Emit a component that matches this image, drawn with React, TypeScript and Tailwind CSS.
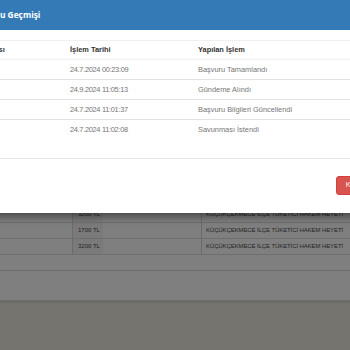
import React from 'react';

const history = [
  { no: '1', date: '24.7.2024 00:23:09', action: 'Başvuru Tamamlandı' },
  { no: '2', date: '24.9.2024 11:05:13', action: 'Gündeme Alındı' },
  { no: '3', date: '24.7.2024 11:01:37', action: 'Başvuru Bilgileri Güncellendi' },
  { no: '4', date: '24.7.2024 11:02:08', action: 'Savunması İstendi' },
];

const pageRows = ['3200 TL', '1700 TL', '3200 TL'];

const BackgroundPage = () => (
  <div className="flex flex-col h-full bg-white font-['Liberation_Sans',Arial,sans-serif]">
    <div className="h-[207px] shrink-0" />
    {pageRows.map((fee, i) => (
      <div
        key={i}
        className="grid grid-cols-[72px_31px_98px_149px] h-[16px] shrink-0 border-b border-[#dcdcdc] text-[6px] text-[#4a4a4a]"
      >
        <div />
        <div className="bg-[#f4f4f4] border-l border-[#d6d6d6] flex items-center pl-[5px] whitespace-nowrap">
          {fee}
        </div>
        <div />
        <div className="border-l border-[#d6d6d6] flex items-center pl-[4px] whitespace-nowrap tracking-[-0.1px]">
          KÜÇÜKÇEKMECE İLÇE TÜKETİCİ HAKEM HEYETİ
        </div>
      </div>
    ))}
    <div className="h-[16px] shrink-0 border-b border-[#d8d8d8]" />
    <div className="h-[29px] shrink-0" />
    <div className="h-[3px] shrink-0 bg-[#d9dad2]" />
    <div className="flex-1 bg-[#eae8de]" />
  </div>
);

const HistoryModal = () => (
  <div className="absolute top-0 left-[-44px] w-[434px] bg-white shadow-[0_3px_9px_rgba(0,0,0,0.5)] font-['Liberation_Sans',Arial,sans-serif]">
    <div className="h-[30px] bg-[#337ab7] flex items-center px-[15px]">
      <h4 className="text-white font-bold text-[8.4px] font-['Open_Sans',sans-serif] whitespace-nowrap">
        Başvuru Geçmişi
      </h4>
    </div>

    <div className="pt-[10px] pb-[18px] px-[10px]">
      <table className="w-full border-collapse table-fixed">
        <colgroup>
          <col className="w-[99px]" />
          <col className="w-[128px]" />
          <col />
        </colgroup>
        <thead>
          <tr className="h-[19px] border-t border-[#f0f0f0] border-b border-[#dddddd] text-[7.4px] text-[#333] font-bold">
            <th className="text-left pl-[5px] font-bold whitespace-nowrap">Numarası</th>
            <th className="text-left pl-[5px] font-bold whitespace-nowrap">İşlem Tarihi</th>
            <th className="text-left pl-[5px] font-bold whitespace-nowrap">Yapılan İşlem</th>
          </tr>
        </thead>
        <tbody className="text-[7.4px] text-[#757575]">
          {history.map((h, i) => (
            <tr key={h.no} className={i < history.length - 1 ? 'h-[20px] border-b border-[#e3e3e3]' : 'h-[20px]'}>
              <td className="pl-[5px]">{h.no}</td>
              <td className="pl-[5px] tracking-[-0.3px] whitespace-nowrap">{h.date}</td>
              <td className="pl-[5px] whitespace-nowrap">{h.action}</td>
            </tr>
          ))}
        </tbody>
      </table>
    </div>

    <div className="border-t border-[#e5e5e5] pt-[17px] pb-[18px] px-[15px] flex justify-end">
      <button className="h-[19px] px-[9px] rounded-[3px] bg-[#d9534f] border border-[#d43f3a] text-white text-[7.4px]">
        Kapat
      </button>
    </div>
  </div>
);

export default function App() {
  return (
    <div className="relative w-[350px] h-[350px] overflow-hidden">
      <BackgroundPage />
      <div className="absolute inset-0 bg-black/50" />
      <HistoryModal />
    </div>
  );
}
